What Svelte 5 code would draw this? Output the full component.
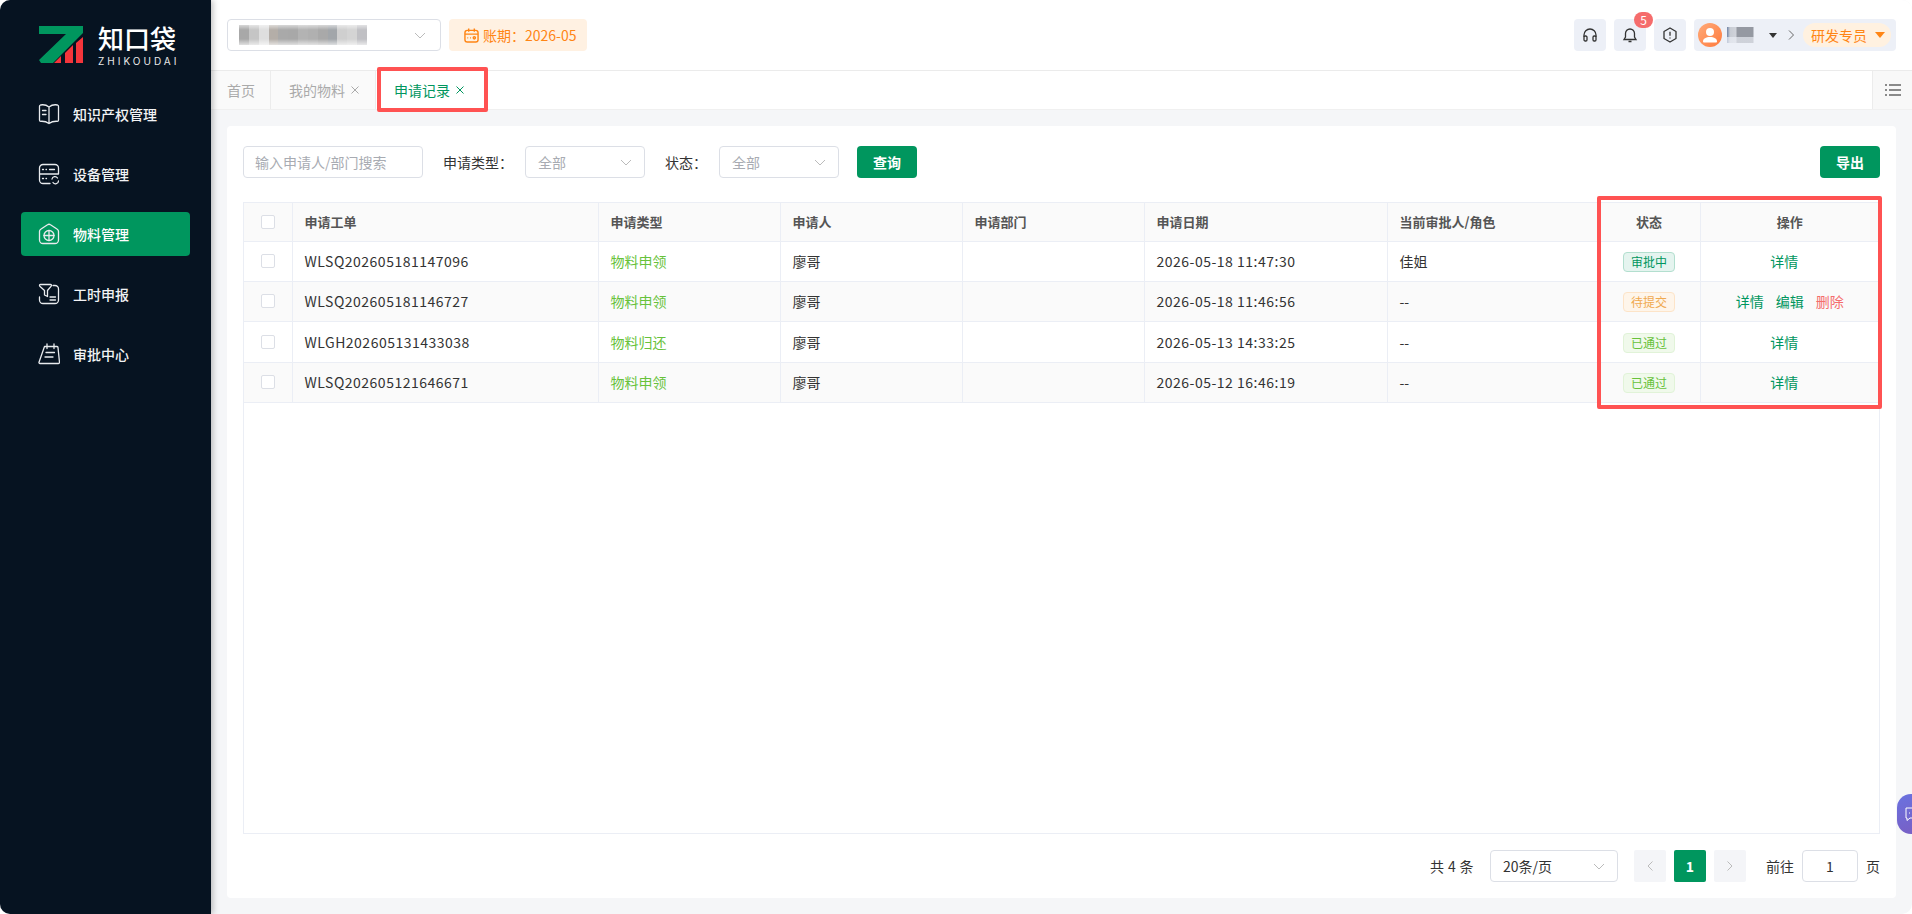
<script lang="ts">
	const menu = [
		{ name: '知识产权管理', icon: 'book' },
		{ name: '设备管理', icon: 'device' },
		{ name: '物料管理', icon: 'house', active: true },
		{ name: '工时申报', icon: 'funnel' },
		{ name: '审批中心', icon: 'note' }
	];

	const rows = [
		{ no: 'WLSQ202605181147096', type: '物料申领', who: '廖哥', date: '2026-05-18 11:47:30', cur: '佳姐', status: '审批中', cls: 'doing', edit: false },
		{ no: 'WLSQ202605181146727', type: '物料申领', who: '廖哥', date: '2026-05-18 11:46:56', cur: '--', status: '待提交', cls: 'draft', edit: true },
		{ no: 'WLGH202605131433038', type: '物料归还', who: '廖哥', date: '2026-05-13 14:33:25', cur: '--', status: '已通过', cls: 'pass', edit: false },
		{ no: 'WLSQ202605121646671', type: '物料申领', who: '廖哥', date: '2026-05-12 16:46:19', cur: '--', status: '已通过', cls: 'pass', edit: false }
	];

	// pixelated company name in the header
	const mosaic = ['#a8a8a8', '#c5c5c5', '#dedede', '#b4aea8', '#a9a9a9', '#a8a8a8', '#b3b3b3', '#b0b0b0', '#a9a9a9', '#a2a6aa', '#cfcfcf', '#d4d4d4', '#c0c0c4'];
</script>

<div class="window">
	<aside class="side">
		<div class="logo">
			<svg class="mark" viewBox="0 0 44 37" width="44" height="37">
				<path d="M0 0H44V7L14 37H2L0 34L27 8H0Z" fill="#00965e" />
				<path d="M15 37L22 30V37ZM26 37V27L34 19V37ZM37 37V17L44 11V37Z" fill="#f4353b" />
			</svg>
			<div class="brand">
				<b>知口袋</b>
				<span>ZHIKOUDAI</span>
			</div>
		</div>
		<nav>
			{#each menu as m}
				<div class="item" class:active={m.active}>
					<svg viewBox="0 0 22 22" width="22" height="22" fill="none" stroke="#e8ebee" stroke-width="1.300" stroke-linejoin="round" stroke-linecap="round">
						{#if m.icon === 'book'}
							<path d="M11 4C8.500 2 5 1.500 2.500 2A1.500 1.500 0 0 0 1.500 3.500V17c0 .8.500 1.300 1.200 1.300 3.300-.2 6 .5 8.300 2.200 2.300-1.700 5-2.400 8.300-2.200.7 0 1.200-.5 1.200-1.300V3.500A1.500 1.500 0 0 0 19.500 2C17 1.500 13.500 2 11 4zM11 4V20.500M4.500 7.500h3.500M4.500 11.500h3.500" />
						{:else if m.icon === 'device'}
							<path d="M5 1.500h12a3.500 3.500 0 0 1 3.500 3.500v6h-19V5A3.500 3.500 0 0 1 5 1.500zM1.500 11v6A3.500 3.500 0 0 0 5 20.500h7M4.500 6.500h1M8 6.500h.5M11.500 6.500h5M4.500 15.500h1M8 15.500h.5M14 16a3 3 0 0 1 5.500-1M20.500 18a3 3 0 0 1-5.500 1.500" />
						{:else if m.icon === 'house'}
							<path d="M9.500 1.800a2.500 2.500 0 0 1 3 0l6.800 4.500a2.500 2.500 0 0 1 1.200 2.200v8.500a3.500 3.500 0 0 1-3.500 3.500H5A3.500 3.500 0 0 1 1.500 17V8.500a2.500 2.500 0 0 1 1.200-2.200z" />
							<circle cx="11" cy="12.500" r="5" />
							<path d="M6 12.500h10M11 7.500v10" />
						{:else if m.icon === 'funnel'}
							<path d="M15 2.500h2a3.500 3.500 0 0 1 3.500 3.500v11a3.500 3.500 0 0 1-3.500 3.500H5A3.500 3.500 0 0 1 1.500 17v-3M2.500 1.500h10c.9 0 1.300 1 .7 1.700L9.500 7.500v6l-3-1.500V7.500L1.800 3.200C1.200 2.500 1.600 1.500 2.500 1.500zM12 14h5.500M12 17h5.500" />
						{:else}
							<path d="M6.500 3.500H19a1 1 0 0 1 1 1L21.500 19.500a1 1 0 0 1-1 1H2a1 1 0 0 1-1-1.300zM9 1v4.500M16 1v4.500M8 9.500h8.500M7 14h8" />
						{/if}
					</svg>
					<span>{m.name}</span>
				</div>
			{/each}
		</nav>
	</aside>

	<main class="main">
		<header class="top">
			<div class="sel company">
				<div class="mosaic">
					{#each mosaic as c}<i style="background:{c}"></i>{/each}
				</div>
				<svg class="chev" viewBox="0 0 12 7" width="12" height="7"><path d="M1 1l5 5 5-5" fill="none" stroke="#bbb" /></svg>
			</div>
			<div class="period">
				<svg viewBox="0 0 16 16" width="15" height="15" fill="none" stroke="#ff8514" stroke-width="1.500">
					<rect x="1" y="2.500" width="14" height="12.500" rx="2.500" />
					<path d="M1 6.500h14M5 .5v3.500M11 .5v3.500M3.500 10.500h1M6.500 10.500h1" />
					<circle cx="11" cy="10.500" r="1.200" />
				</svg>
				<span>账期：2026-05</span>
			</div>
			<div class="spacer"></div>
			<div class="tools">
				<button class="tool">
					<svg viewBox="0 0 16 16" width="16" height="16" fill="none" stroke="#333" stroke-width="1.300">
						<path d="M2 10V8a6 6 0 0 1 12 0v2" />
						<rect x="2" y="9" width="3" height="5" rx="1.200" />
						<rect x="11" y="9" width="3" height="5" rx="1.200" />
					</svg>
				</button>
				<button class="tool">
					<svg viewBox="0 0 16 16" width="16" height="16" fill="none" stroke="#333" stroke-width="1.300">
						<path d="M8 2a4.500 4.500 0 0 0-4.500 4.500V10L2 12.500h12L12.500 10V6.500A4.500 4.500 0 0 0 8 2zM6.500 14.500h3" />
					</svg>
					<em class="badge">5</em>
				</button>
				<button class="tool">
					<svg viewBox="0 0 16 16" width="16" height="16" fill="none" stroke="#333" stroke-width="1.300" stroke-linejoin="round">
						<path d="M8 1l6 3.500v7L8 15l-6-3.500v-7z" />
						<path d="M8 4.800v4M8 10.400v1.200" />
					</svg>
				</button>
				<div class="user">
					<div class="avatar">
						<svg viewBox="0 0 24 24" width="24" height="24" fill="#fff"><circle cx="12" cy="9" r="4" /><path d="M5 18.500c0-3 3-4.500 7-4.500s7 1.500 7 4.500c0 .5-.5 1-1 1H6c-.5 0-1-.5-1-1z" /></svg>
					</div>
					<div class="name"></div>
					<i class="caret dark"></i>
					<svg class="gt" viewBox="0 0 6 10" width="6" height="10"><path d="M1 .5l4.500 4.500L1 9.500" fill="none" stroke="#666" /></svg>
					<div class="role">研发专员<i class="caret orange"></i></div>
				</div>
			</div>
		</header>

		<div class="tabs">
			<div class="tab">首页</div>
			<div class="tab">我的物料<svg class="x" viewBox="0 0 8 8" width="8" height="8"><path d="M.5.500l7 7M7.500.500l-7 7" stroke="#aaa" /></svg></div>
			<div class="tab on">申请记录<svg class="x" viewBox="0 0 8 8" width="8" height="8"><path d="M.5.500l7 7M7.500.500l-7 7" stroke="#00965e" /></svg></div>
			<div class="spacer"></div>
			<div class="more">
				<svg viewBox="0 0 16 12" width="16" height="12" stroke="#666" stroke-width="1.300"><path d="M0 1h2M4 1h12M0 6h2M4 6h12M0 11h2M4 11h12" /></svg>
			</div>
		</div>

		<section class="body">
			<div class="card">
				<div class="filters">
					<div class="input ph">输入申请人/部门搜索</div>
					<label class="lbl">申请类型：</label>
					<div class="sel small ph">全部<svg class="chev" viewBox="0 0 12 7" width="12" height="7"><path d="M1 1l5 5 5-5" fill="none" stroke="#bbb" /></svg></div>
					<label class="lbl short">状态：</label>
					<div class="sel small ph">全部<svg class="chev" viewBox="0 0 12 7" width="12" height="7"><path d="M1 1l5 5 5-5" fill="none" stroke="#bbb" /></svg></div>
					<button class="btn">查询</button>
					<div class="spacer"></div>
					<button class="btn">导出</button>
				</div>

				<div class="table">
					<table>
						<colgroup>
							<col style="width:48px" /><col style="width:306px" /><col style="width:182px" /><col style="width:182px" /><col style="width:182px" /><col style="width:243px" /><col style="width:211px" /><col style="width:102px" /><col style="width:179px" />
						</colgroup>
						<thead>
							<tr>
								<th class="chk"><i class="box"></i></th>
								<th>申请工单</th>
								<th>申请类型</th>
								<th>申请人</th>
								<th>申请部门</th>
								<th>申请日期</th>
								<th>当前审批人/角色</th>
								<th class="c">状态</th>
								<th class="c">操作</th>
							</tr>
						</thead>
						<tbody>
							{#each rows as r}
								<tr>
									<td class="chk"><i class="box"></i></td>
									<td class="num">{r.no}</td>
									<td class="type">{r.type}</td>
									<td>{r.who}</td>
									<td></td>
									<td class="num">{r.date}</td>
									<td>{r.cur}</td>
									<td class="c"><span class="tag {r.cls}">{r.status}</span></td>
									<td class="c ops"><a>详情</a>{#if r.edit}<a>编辑</a><a class="del">删除</a>{/if}</td>
								</tr>
							{/each}
						</tbody>
					</table>
				</div>

				<div class="pager">
					<span class="total">共 4 条</span>
					<div class="sel size">20条/页<svg class="chev" viewBox="0 0 12 7" width="12" height="7"><path d="M1 1l5 5 5-5" fill="none" stroke="#bbb" /></svg></div>
					<button class="pg prev"><svg viewBox="0 0 6 10" width="6" height="10"><path d="M5.500.5L1 5l4.500 4.500" fill="none" stroke="#bbb" /></svg></button>
					<button class="pg cur">1</button>
					<button class="pg"><svg viewBox="0 0 6 10" width="6" height="10"><path d="M.5.500L5 5 .5 9.500" fill="none" stroke="#bbb" /></svg></button>
					<span class="goto">前往</span>
					<div class="jump">1</div>
					<span>页</span>
				</div>
			</div>
		</section>
	</main>

	<!-- red annotation boxes drawn over the screenshot -->
	<div class="mark-box tab-mark"></div>
	<div class="mark-box col-mark"></div>

	<div class="chat">
		<svg viewBox="0 0 16 16" width="16" height="16" fill="none" stroke="#fff" stroke-width="1"><path d="M2 2h12v10H6l-3 2.500V12H2zM5 7h1M8 7h1M11 7h1" /></svg>
	</div>
</div>

<style>
	:global(body) {
		margin: 0;
		background: #fff;
	}
	.window {
		position: relative;
		display: flex;
		width: 1912px;
		height: 914px;
		overflow: hidden;
		border-radius: 10px;
		background: #f5f6f8;
		font-family: 'Noto Sans CJK SC', 'Noto Sans', sans-serif;
		font-size: 14px;
		color: #333;
	}
	.side {
		flex: 0 0 211px;
		background: #061321;
		box-shadow: 2px 0 6px rgba(0, 0, 0, 0.25);
		z-index: 2;
	}
	.logo {
		display: flex;
		gap: 15px;
		padding: 26px 0 0 39px;
		height: 62px;
	}
	.brand {
		display: flex;
		flex-direction: column;
		color: #fff;
	}
	.brand b {
		font-size: 26px;
		line-height: 23px;
		font-weight: 500;
	}
	.brand span {
		font-size: 10px;
		line-height: 10px;
		margin-top: 7px;
		letter-spacing: 3px;
		font-family: 'Inter', sans-serif;
		color: #e8e8e8;
		white-space: nowrap;
	}
	nav {
		display: flex;
		flex-direction: column;
		gap: 16px;
		padding: 4px 21px 0;
	}
	.item {
		display: flex;
		align-items: center;
		gap: 13px;
		height: 44px;
		padding-left: 17px;
		border-radius: 4px;
		color: #f2f3f5;
		font-weight: 500;
	}
	.item.active {
		background: #00965e;
		color: #fff;
	}
	.main {
		flex: 1;
		min-width: 0;
		display: flex;
		flex-direction: column;
	}
	.top {
		display: flex;
		align-items: center;
		gap: 8px;
		padding: 0 16px;
		background: #fff;
		border-bottom: 1px solid #ebebeb;
		box-sizing: border-box;
		flex: none;
		height: 71px;
	}
	.spacer {
		flex: 1;
	}
	.sel,
	.input,
	.jump {
		box-sizing: border-box;
		height: 32px;
		border: 1px solid #dcdfe6;
		border-radius: 4px;
		background: #fff;
		display: flex;
		align-items: center;
	}
	.chev {
		margin-left: auto;
	}
	.company {
		width: 214px;
		padding: 0 14px 0 11px;
	}
	.mosaic {
		position: relative;
		display: flex;
		width: 128px;
		height: 20px;
		filter: blur(0.6px);
	}
	.mosaic i {
		flex: 1;
	}
	.mosaic::after {
		content: '';
		position: absolute;
		inset: 0;
		background: linear-gradient(180deg, rgba(255, 255, 255, 0.55), transparent 25%, transparent 70%, rgba(255, 255, 255, 0.65));
	}
	.period {
		display: flex;
		align-items: center;
		gap: 4px;
		height: 32px;
		width: 138px;
		box-sizing: border-box;
		padding-left: 15px;
		border-radius: 4px;
		background: #fff1e2;
		color: #ff8514;
	}
	.tools {
		display: flex;
		align-items: center;
		gap: 8px;
	}
	button {
		font-family: inherit;
		border: 0;
		padding: 0;
	}
	.tool {
		position: relative;
		display: flex;
		align-items: center;
		justify-content: center;
		width: 32px;
		height: 32px;
		border-radius: 4px;
		background: #edf0f7;
	}
	.badge {
		position: absolute;
		top: -7px;
		right: -7px;
		width: 19px;
		height: 16px;
		border-radius: 8px;
		background: #f56c6c;
		color: #fff;
		font-style: normal;
		font-size: 12px;
		line-height: 16px;
		text-align: center;
	}
	.user {
		display: flex;
		align-items: center;
		width: 202px;
		height: 32px;
		box-sizing: border-box;
		padding-left: 4px;
		border-radius: 4px;
		background: #edf0f7;
	}
	.avatar {
		width: 24px;
		height: 24px;
		border-radius: 50%;
		background: linear-gradient(135deg, #ffab7a, #ff7a3c);
	}
	.name {
		width: 30px;
		height: 16px;
		margin: 0 12px 0 5px;
		background:
			linear-gradient(180deg, transparent 60%, rgba(237, 240, 247, 0.65) 60%),
			linear-gradient(90deg, #6f82a4 0, #c8ccd4 3px, #d0d3da 9px, #9599a2 10px, #9599a2 26px, #edf0f7 27px);
		filter: blur(0.5px);
	}
	.caret {
		display: block;
		width: 0;
		height: 0;
		border-left: 4.500px solid transparent;
		border-right: 4.500px solid transparent;
		border-top: 5px solid #333;
	}
	.caret.orange {
		border-left-width: 5px;
		border-right-width: 5px;
		border-top: 6px solid #ff8514;
		margin-left: 8px;
	}
	.gt {
		margin: 0 9px 0 11px;
	}
	.role {
		display: flex;
		align-items: center;
		width: 88px;
		box-sizing: border-box;
		height: 24px;
		padding-left: 8px;
		border-radius: 12px;
		background: #fff1e0;
		color: #ff8514;
	}
	.tabs {
		display: flex;
		height: 39px;
		flex: none;
		background: #fff;
		border-bottom: 1px solid #f0f0f0;
		box-sizing: border-box;
	}
	.tab {
		display: flex;
		align-items: center;
		box-sizing: border-box;
		width: 60px;
		padding-left: 16px;
		color: #aaa;
		background: #fafafa;
		border-right: 1px solid #ececec;
	}
	.tab:nth-child(2) {
		width: 105px;
		padding-left: 18px;
	}
	.tab.on {
		width: 111px;
		padding-left: 18px;
		background: #fff;
		color: #00965e;
		border-right: 0;
	}
	.x {
		margin-left: 6px;
	}
	.more {
		display: flex;
		align-items: center;
		justify-content: center;
		width: 39px;
		background: #f8f8f8;
		border-left: 1px solid #ececec;
	}
	.body {
		flex: 1;
		padding: 16px;
		min-height: 0;
	}
	.card {
		box-sizing: border-box;
		height: 100%;
		padding: 20px 16px 16px;
		border-radius: 4px;
		background: #fff;
		display: flex;
		flex-direction: column;
	}
	.filters {
		display: flex;
		align-items: center;
		height: 32px;
		flex: none;
	}
	.input {
		width: 180px;
		padding: 0 11px;
	}
	.ph {
		color: #a8abb2;
	}
	.lbl {
		margin: 0 12px 0 20px;
		width: 70px;
		white-space: nowrap;
	}
	.lbl.short {
		width: 42px;
	}
	.sel.small {
		width: 120px;
		padding: 0 12px;
	}
	.btn {
		width: 60px;
		height: 32px;
		border-radius: 4px;
		background: #00965e;
		color: #fff;
		font-size: 14px;
		font-weight: 700;
	}
	.sel + .btn {
		margin-left: 18px;
	}
	.table {
		flex: 1;
		min-height: 0;
		margin-top: 24px;
		border: 1px solid #ebeef5;
		box-sizing: border-box;
	}
	table {
		width: 100%;
		table-layout: fixed;
		border-collapse: collapse;
	}
	th,
	td {
		height: 40px;
		padding: 0 12px;
		box-sizing: border-box;
		border: 1px solid #ebeef5;
		border-top: 0;
		text-align: left;
		font-size: 14px;
		font-weight: 400;
	}
	tr > :first-child {
		border-left: 0;
	}
	tr > :last-child {
		border-right: 0;
	}
	th {
		height: 38px;
		background: #fafafa;
		font-size: 13px;
		font-weight: 700;
		color: #555;
	}
	tbody tr:nth-child(even) {
		background: #fafafa;
	}
	tbody tr:nth-child(3) td {
		height: 41px;
	}
	.num {
		letter-spacing: 0.5px;
	}
	.chk {
		padding: 0;
	}
	.box {
		display: block;
		width: 14px;
		height: 14px;
		margin: 0 auto;
		box-sizing: border-box;
		border: 1px solid #dcdfe6;
		border-radius: 2px;
		background: #fff;
	}
	.type {
		color: #67c23a;
	}
	th.c,
	td.c {
		text-align: center;
	}
	.tag {
		display: inline-block;
		box-sizing: border-box;
		width: 52px;
		height: 20px;
		line-height: 18px;
		border: 1px solid;
		border-radius: 4px;
		font-size: 12px;
		vertical-align: middle;
	}
	.doing {
		color: #00965e;
		background: #e5f4ef;
		border-color: #b3dfcf;
	}
	.draft {
		color: #f0a94f;
		background: #fef5ea;
		border-color: #fde4c8;
	}
	.pass {
		color: #67c23a;
		background: #f0f9eb;
		border-color: #e1f3d8;
	}
	.ops a {
		color: #00965e;
		margin: 0 6px;
	}
	.ops a:only-child {
		margin-right: 17px;
	}
	.ops a.del {
		color: #f56c6c;
	}
	.pager {
		display: flex;
		align-items: center;
		justify-content: flex-end;
		flex: none;
		margin-top: 16px;
		height: 32px;
	}
	.total {
		letter-spacing: 0.4px;
	}
	.sel.size {
		width: 128px;
		margin: 0 16px;
		padding: 0 12px;
	}
	.pg {
		display: flex;
		align-items: center;
		justify-content: center;
		width: 32px;
		height: 32px;
		border-radius: 2px;
		background: #f4f5f8;
		margin-right: 8px;
	}
	.pg.cur {
		background: #00965e;
		color: #fff;
		font-weight: 700;
		font-size: 14px;
	}
	.goto {
		margin: 0 8px 0 12px;
	}
	.jump {
		width: 56px;
		justify-content: center;
		margin-right: 8px;
	}
	.mark-box {
		position: absolute;
		box-sizing: border-box;
		border: 4px solid #ff5252;
		border-radius: 2px;
		z-index: 3;
		pointer-events: none;
	}
	.tab-mark {
		left: 377px;
		top: 67px;
		width: 111px;
		height: 45px;
	}
	.col-mark {
		left: 1597px;
		top: 196px;
		width: 285px;
		height: 213px;
	}
	.chat {
		position: absolute;
		left: 1897px;
		top: 794px;
		width: 30px;
		height: 40px;
		display: flex;
		align-items: center;
		padding-left: 7px;
		border-radius: 14px 0 0 14px;
		background: linear-gradient(160deg, #6a72e0, #7a5cc0);
	}
</style>
